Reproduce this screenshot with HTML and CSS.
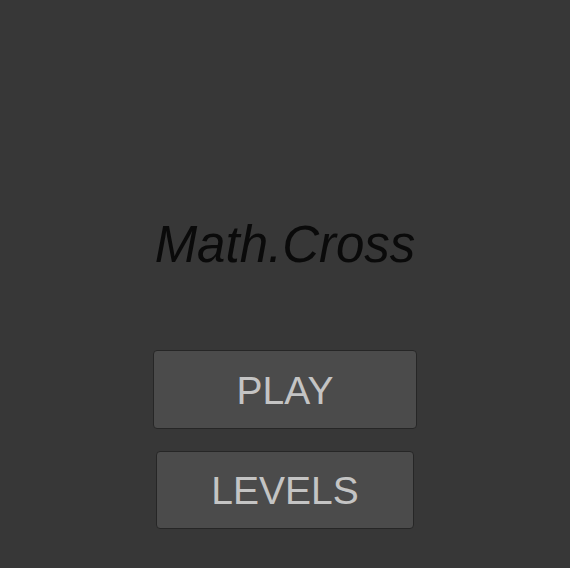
FILE: index.html
```html
<!DOCTYPE html>
<html>
<head>
  <title>Math.Cross</title>
  <link rel="stylesheet" href="styles.css">
</head>
<body>
  <div class="menu">
    <h1 class="title">Math.Cross</h1>

    <div class="buttons">
      <button class="menu-button play">PLAY</button>
      <button class="menu-button levels">LEVELS</button>
    </div>
  </div>
</body>
</html>
```

FILE: styles.css
```css
/* Main menu */
html, body {
  margin: 0;
  height: 100%;
}

body {
  font-family: "Liberation Sans", Arial, sans-serif;
  background-color: #373737;
}

.menu {
  display: flex;
  flex-direction: column;
  align-items: center;
  padding-top: 215px;
}

.title {
  margin: 0;
  font-size: 51px;
  line-height: 60px;
  font-style: italic;
  font-weight: normal;
  color: #0a0a0a;
}

.buttons {
  display: flex;
  flex-direction: column;
  align-items: center;
  gap: 22px;
  margin-top: 75px;
}

.menu-button {
  font-family: inherit;
  font-size: 39px;
  color: #c4c4c4;
  background-color: #4b4b4b;
  border: 1px solid #262626;
  border-radius: 4px;
  padding: 2px 0 0;
  cursor: pointer;
}

.menu-button:hover {
  background-color: #555;
}

.play {
  width: 264px;
  height: 79px;
}

.levels {
  width: 258px;
  height: 78px;
}
```
